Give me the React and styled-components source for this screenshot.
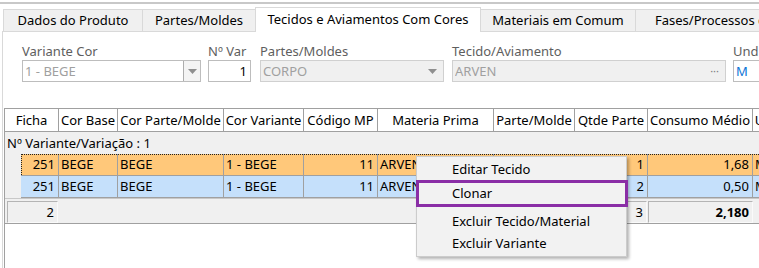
import React from 'react';
import styled, { createGlobalStyle, css } from 'styled-components';

const Global = createGlobalStyle`
  html, body { margin: 0; padding: 0; background: #fff; }
  body {
    font-family: "Noto Sans", "Open Sans", "Liberation Sans", sans-serif;
    font-size: 13px;
    color: #000;
  }
  * { box-sizing: border-box; }
`;

const Screen = styled.div`
  position: relative;
  width: 759px;
  height: 268px;
  overflow: hidden;
  background: #fff;
  padding-top: 2px;
  display: flex;
  flex-direction: column;
`;

const TopRule = styled.div`
  height: 2px;
  background: #c8c8c8;
  flex: none;
`;

const Window = styled.div`
  margin-left: 2px;
  flex: 1;
  display: flex;
  flex-direction: column;
  min-height: 0;
`;

const TabStrip = styled.div`
  display: flex;
  align-items: flex-end;
  height: 27px;
  padding-left: 1px;
  position: relative;
  z-index: 1;
  flex: none;
  white-space: nowrap;
`;

const Tab = styled.div`
  flex: none;
  width: ${p => p.$w}px;
  margin-left: ${p => (p.$first ? 0 : -1)}px;
  border: 1px solid #d9d9d9;
  border-bottom: none;
  text-align: center;
  overflow: hidden;
  ${p => p.$active
    ? css`
      height: 25px;
      margin-bottom: -1px;
      background: #fff;
      line-height: 22px;
      position: relative;
      z-index: 2;
    `
    : css`
      height: 22px;
      background: #f0f0f0;
      line-height: 21px;
    `}
`;

const Panel = styled.div`
  flex: 1;
  border-top: 1px solid #d9d9d9;
  border-left: 1px solid #d9d9d9;
  background: #fff;
  display: flex;
  flex-direction: column;
  min-height: 0;
`;

const FormRow = styled.div`
  display: flex;
  padding: 11px 0 0 19px;
  flex: none;
  white-space: nowrap;
`;

const Field = styled.div`
  flex: none;
  width: ${p => p.$w}px;
  margin-left: ${p => p.$ml || 0}px;
  display: flex;
  flex-direction: column;
`;

const Label = styled.div`
  height: 17px;
  line-height: 17px;
  color: #5e5e5e;
`;

const InputBox = styled.div`
  height: 22px;
  display: flex;
  align-items: center;
  border: 1px solid ${p => (p.$disabled ? '#d0d0d0' : '#bdbdbd')};
  background: ${p => (p.$disabled ? '#f0f0f0' : '#fff')};
  color: ${p => p.$color || '#a0a0a0'};
  justify-content: ${p => (p.$right ? 'flex-end' : 'flex-start')};
  padding: 0 ${p => (p.$right ? 3 : 0)}px 0 ${p => (p.$right ? 0 : 2)}px;
  line-height: 20px;
  overflow: hidden;
`;

const InputText = styled.span`
  flex: 1;
  overflow: hidden;
`;

const DropButton = styled.div`
  flex: none;
  width: 17px;
  height: 20px;
  display: flex;
  align-items: center;
  justify-content: center;
  border-left: ${p => (p.$boxed ? '1px solid #adadad' : 'none')};
  background: ${p => (p.$boxed ? '#f4f4f4' : 'transparent')};
  margin-right: ${p => (p.$boxed ? 0 : 2)}px;
`;

const Ellipsis = styled.span`
  flex: none;
  color: #808080;
  font-size: 11px;
  margin-right: 6px;
  line-height: 20px;
`;

const Arrow = () => (
  <svg width="9" height="5" viewBox="0 0 9 5">
    <path d="M0 0 H9 L4.5 5 Z" fill="#8f8f8f" />
  </svg>
);

const GridBox = styled.div`
  margin: 26px 0 0 1px;
  flex: 1;
  border-top: 1px solid #a0a0a0;
  border-left: 1px solid #a0a0a0;
  background: #fff;
  display: flex;
  flex-direction: column;
  white-space: nowrap;
  min-height: 0;
`;

const HeaderRow = styled.div`
  display: flex;
  height: 23px;
  border-bottom: 1px solid #a0a0a0;
  background: #fff;
  flex: none;
`;

const HeaderCell = styled.div`
  flex: none;
  width: ${p => p.$w}px;
  border-right: 1px solid #a0a0a0;
  text-align: center;
  line-height: 22px;
  overflow: hidden;
`;

const GroupRow = styled.div`
  height: 22px;
  line-height: 22px;
  background: #f0f0f0;
  padding-left: 2px;
  flex: none;
`;

const DataRow = styled.div`
  display: flex;
  height: 22px;
  background: #f0f0f0;
  flex: none;
`;

const Indent = styled.div`
  flex: none;
  width: 16px;
`;

const RowCells = styled.div`
  display: flex;
  flex: 1;
  position: relative;
  background: ${p => p.$bg};
  border-bottom: 1px solid #a0a0a0;
  ${p => p.$focus && css`
    &::after {
      content: '';
      position: absolute;
      inset: 0;
      border-top: 1px dotted #202020;
      border-left: 1px dotted #202020;
      pointer-events: none;
    }
  `}
`;

const Cell = styled.div`
  flex: none;
  width: ${p => p.$w}px;
  border-right: 1px solid #a0a0a0;
  text-align: ${p => (p.$right ? 'right' : 'left')};
  padding: 0 ${p => (p.$right ? 3 : 0)}px 0 ${p => (p.$right ? 0 : 2)}px;
  line-height: 21px;
  overflow: hidden;
`;

const FooterRow = styled.div`
  display: flex;
  height: 26px;
  padding-top: 2px;
  background: #f0f0f0;
  border-top: 1px solid #c8c8c8;
  border-bottom: 1px solid #a0a0a0;
  flex: none;
`;

const FooterCell = styled.div`
  flex: none;
  width: ${p => p.$w}px;
  display: flex;
`;

const SumBox = styled.div`
  flex: 1;
  height: 22px;
  margin: 0 ${p => p.$mr ?? 1}px 0 ${p => p.$ml ?? 2}px;
  border: 1px solid #b4b4b4;
  border-right-color: #fafafa;
  border-bottom-color: #fafafa;
  text-align: right;
  padding-right: 3px;
  line-height: 20px;
  font-weight: ${p => (p.$bold ? 700 : 400)};
`;

const Menu = styled.div`
  position: absolute;
  left: 416px;
  top: 156px;
  width: 211px;
  padding: 1px 0 2px;
  background: #f2f2f2;
  border: 1px solid #cccccc;
  box-shadow: 2px 2px 3px rgba(0, 0, 0, 0.3);
  z-index: 10;
  white-space: nowrap;
`;

const MenuItem = styled.div`
  height: 22px;
  line-height: 22px;
  padding-left: 35px;
  color: #000;
  ${p => p.$outlined && css`
    height: 27px;
    line-height: 21px;
    margin: 0 -2px 0 -1px;
    padding-left: 33px;
    border: 3px solid #8a2ea6;
  `}
`;

const MenuGap = styled.div`
  height: 3px;
`;

const columns = [
  { t: 'Ficha', w: 54, right: true },
  { t: 'Cor Base', w: 59 },
  { t: 'Cor Parte/Molde', w: 106 },
  { t: 'Cor Variante', w: 80 },
  { t: 'Código MP', w: 74, right: true },
  { t: 'Materia Prima', w: 116 },
  { t: 'Parte/Molde', w: 81 },
  { t: 'Qtde Parte', w: 73, right: true },
  { t: 'Consumo Médio', w: 105, right: true },
  { t: 'Und', w: 30 },
  { t: 'Observação', w: 90 },
];

const rows = [
  { bg: '#ffc87a', focus: true, v: ['251', 'BEGE', 'BEGE', '1 - BEGE', '11', 'ARVEN', '', '1', '1,68', 'M', ''] },
  { bg: '#c5e0fb', v: ['251', 'BEGE', 'BEGE', '1 - BEGE', '11', 'ARVEN', '', '2', '0,50', 'M', ''] },
];

const footer = [
  { i: 0, v: '2' },
  { i: 7, v: '3' },
  { i: 8, v: '2,180', bold: true, ml: 0, mr: 0 },
];

const tabs = [
  { t: 'Dados do Produto', w: 140 },
  { t: 'Partes/Moldes', w: 114 },
  { t: 'Tecidos e Aviamentos Com Cores', w: 226, active: true },
  { t: 'Materiais em Comum', w: 156 },
  { t: 'Fases/Processos de Produção', w: 220 },
];

export default function App() {
  return (
    <>
      <Global />
      <Screen>
        <TopRule />
        <Window>
          <TabStrip>
            {tabs.map((tb, i) => (
              <Tab key={tb.t} $w={tb.w} $first={i === 0} $active={tb.active}>{tb.t}</Tab>
            ))}
          </TabStrip>
          <Panel>
            <FormRow>
              <Field $w={179}>
                <Label>Variante Cor</Label>
                <InputBox>
                  <InputText>1 - BEGE</InputText>
                  <DropButton $boxed><Arrow /></DropButton>
                </InputBox>
              </Field>
              <Field $w={43} $ml={7}>
                <Label>Nº Var</Label>
                <InputBox $right $color="#000">1</InputBox>
              </Field>
              <Field $w={184} $ml={9}>
                <Label>Partes/Moldes</Label>
                <InputBox $disabled>
                  <InputText>CORPO</InputText>
                  <DropButton><Arrow /></DropButton>
                </InputBox>
              </Field>
              <Field $w={274} $ml={8}>
                <Label>Tecido/Aviamento</Label>
                <InputBox $disabled>
                  <InputText>ARVEN</InputText>
                  <Ellipsis>···</Ellipsis>
                </InputBox>
              </Field>
              <Field $w={60} $ml={7}>
                <Label>Und</Label>
                <InputBox $color="#0a74d6">M</InputBox>
              </Field>
            </FormRow>

            <GridBox>
              <HeaderRow>
                {columns.map(c => (
                  <HeaderCell key={c.t} $w={c.w}>{c.t}</HeaderCell>
                ))}
              </HeaderRow>
              <GroupRow>Nº Variante/Variação : 1</GroupRow>
              {rows.map((r, ri) => (
                <DataRow key={ri}>
                  <Indent />
                  <RowCells $bg={r.bg} $focus={r.focus}>
                    {columns.map((c, ci) => (
                      <Cell key={c.t} $w={ci === 0 ? c.w - 16 : c.w} $right={c.right}>{r.v[ci]}</Cell>
                    ))}
                  </RowCells>
                </DataRow>
              ))}
              <FooterRow>
                {columns.map((c, ci) => {
                  const f = footer.find(x => x.i === ci);
                  return (
                    <FooterCell key={c.t} $w={c.w}>
                      {f && <SumBox $bold={f.bold} $ml={f.ml} $mr={f.mr}>{f.v}</SumBox>}
                    </FooterCell>
                  );
                })}
              </FooterRow>
            </GridBox>
          </Panel>
        </Window>

        <Menu>
          <MenuItem>Editar Tecido</MenuItem>
          <MenuItem $outlined>Clonar</MenuItem>
          <MenuGap />
          <MenuItem>Excluir Tecido/Material</MenuItem>
          <MenuItem>Excluir Variante</MenuItem>
        </Menu>
      </Screen>
    </>
  );
}
